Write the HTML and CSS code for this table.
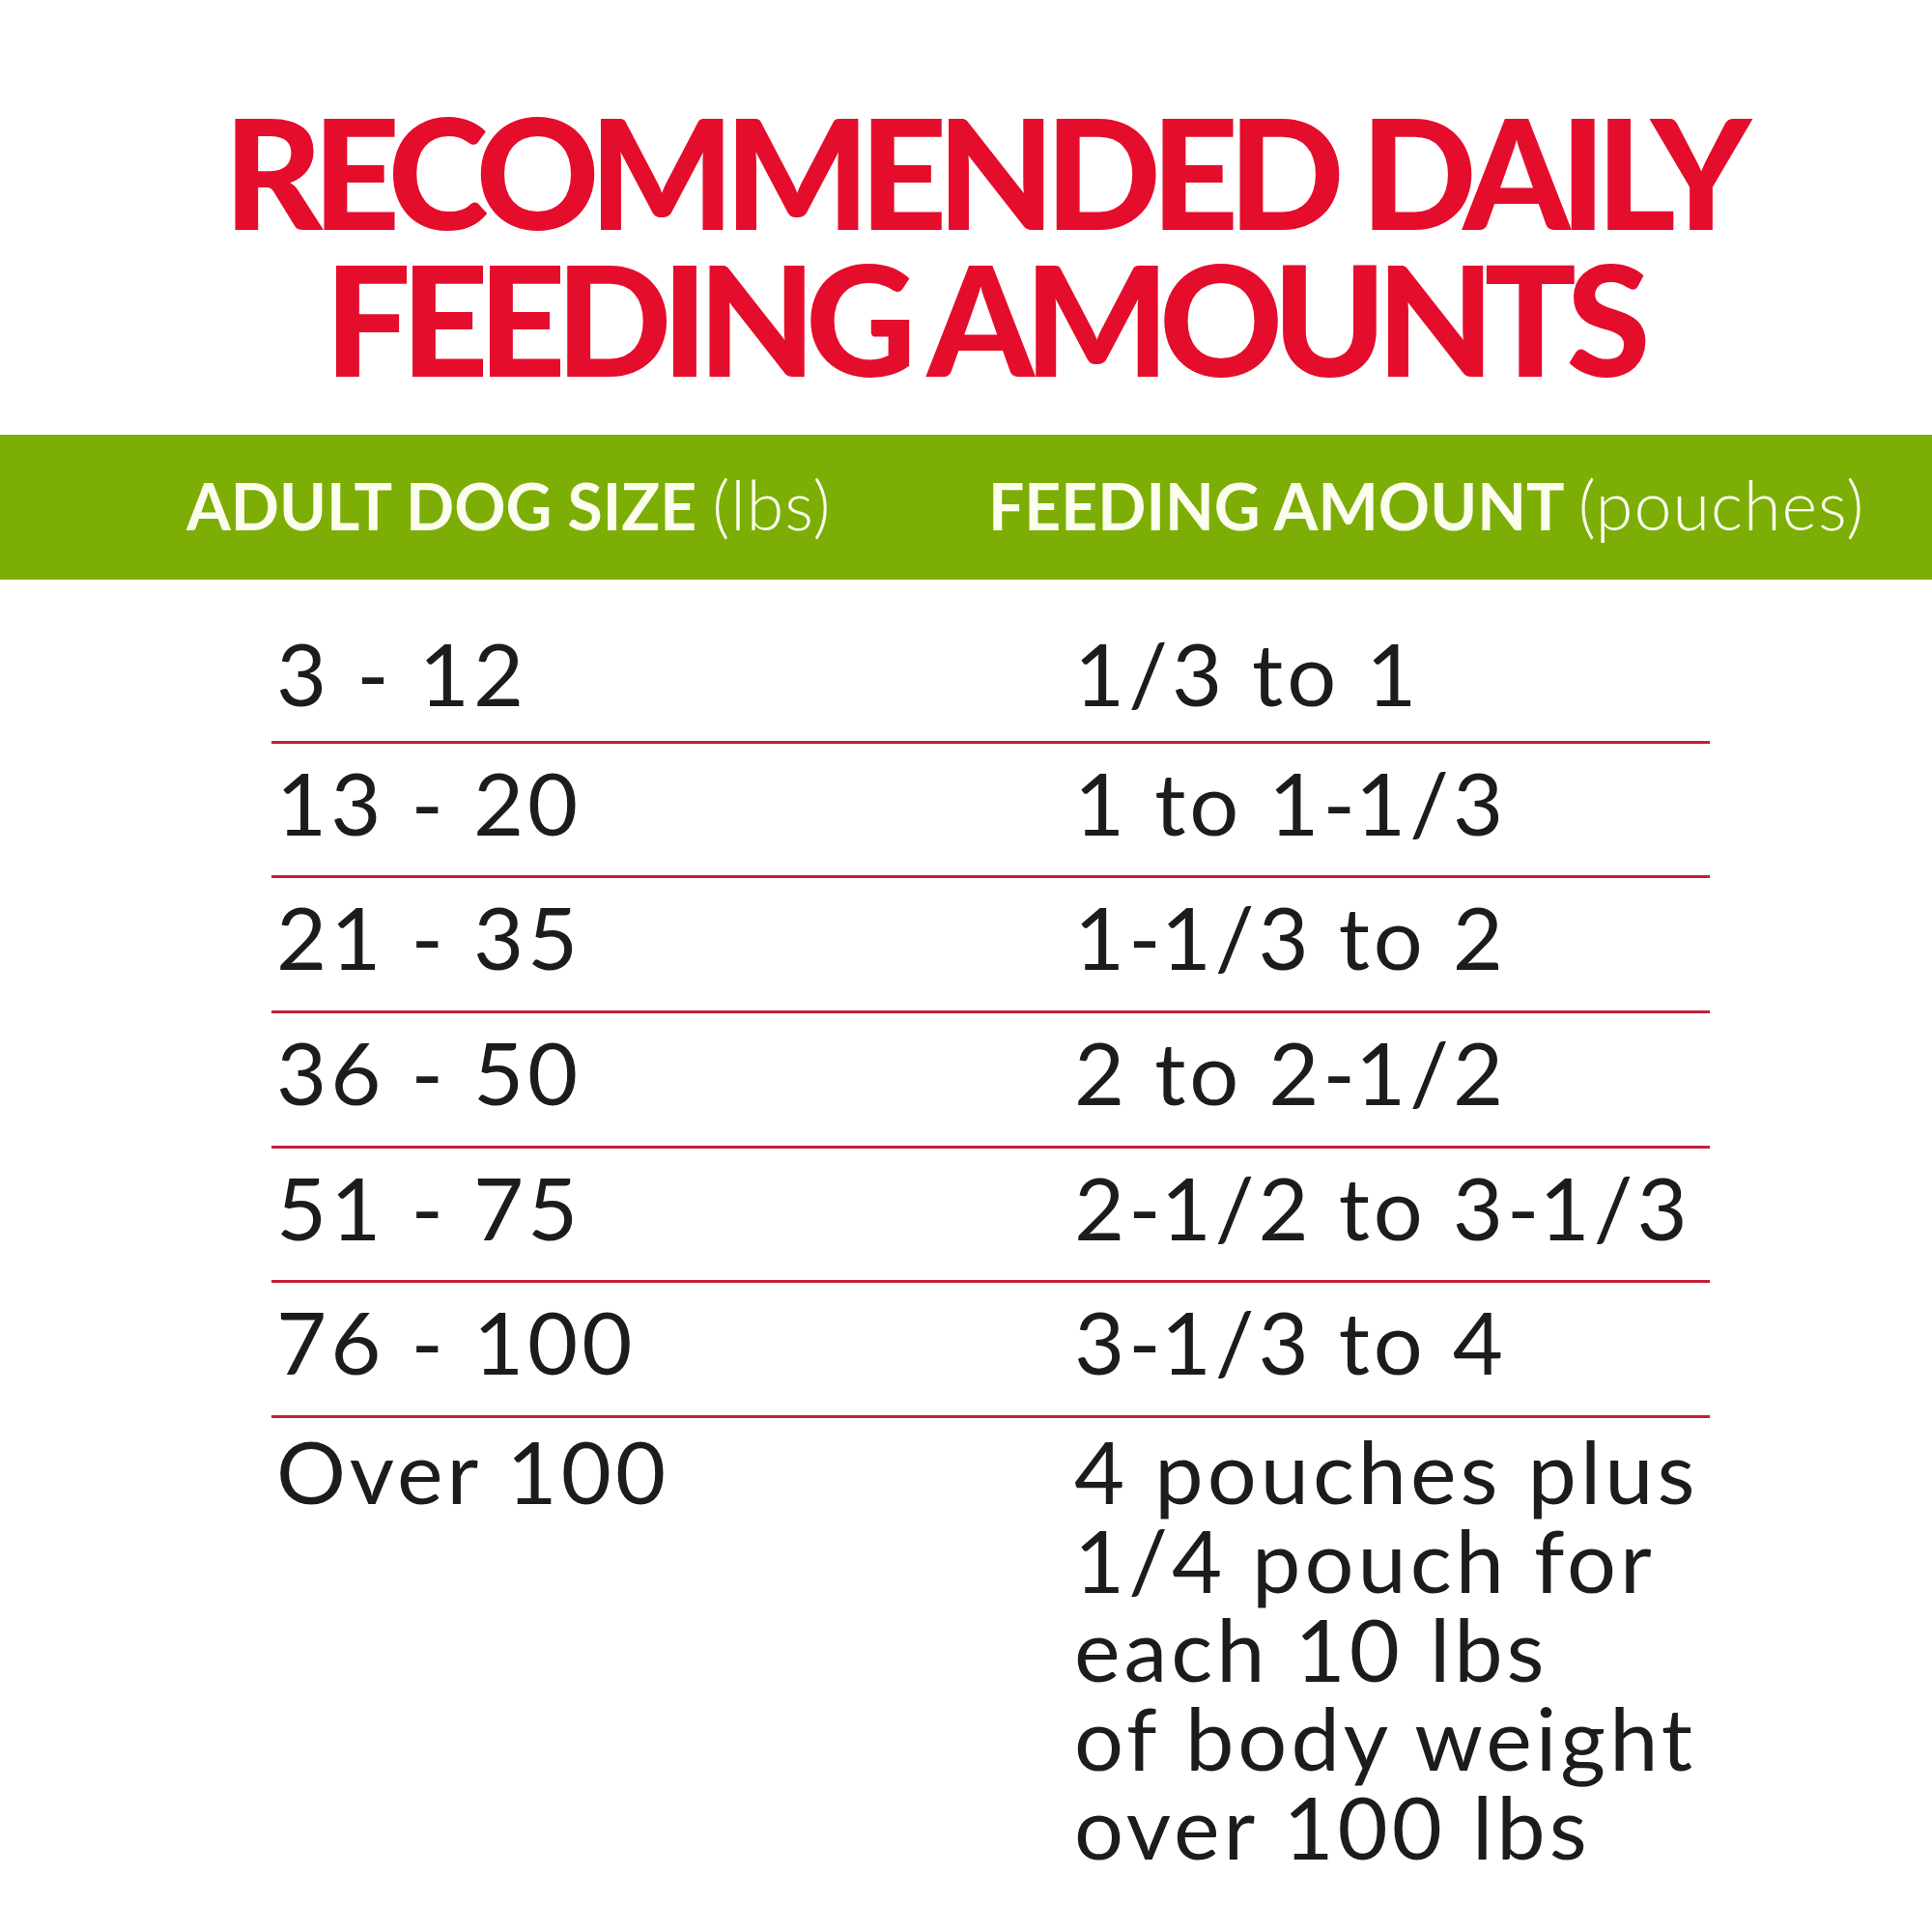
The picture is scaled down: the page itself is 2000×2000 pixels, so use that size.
FILE: index.html
```html
<!DOCTYPE html>
<html lang="en">
<head>
<meta charset="utf-8">
<title>Recommended Daily Feeding Amounts</title>
<link rel="stylesheet" href="styles.css">
</head>
<body>
<main class="chart">
  <h1 class="title">RECOMMENDED DAILY<br>FEEDING AMOUNTS</h1>
  <div class="head">
    <div class="head-cell head-size">ADULT DOG SIZE <span class="unit">(lbs)</span></div>
    <div class="head-cell head-amount">FEEDING AMOUNT <span class="unit">(pouches)</span></div>
  </div>
  <div class="rows">
    <div class="row"><div class="c1">3 - 12</div><div class="c2">1/3 to 1</div></div>
    <div class="row"><div class="c1">13 - 20</div><div class="c2">1 to 1<span class="tight">-</span>1/3</div></div>
    <div class="row"><div class="c1">21 - 35</div><div class="c2">1<span class="tight">-</span>1/3 to 2</div></div>
    <div class="row"><div class="c1">36 - 50</div><div class="c2">2 to 2<span class="tight">-</span>1/2</div></div>
    <div class="row"><div class="c1">51 - 75</div><div class="c2">2<span class="tight">-</span>1/2 to 3<span class="tight">-</span>1/3</div></div>
    <div class="row"><div class="c1">76 - 100</div><div class="c2">3<span class="tight">-</span>1/3 to 4</div></div>
    <div class="row last"><div class="c1">Over 100</div><div class="c2 multi"><span>4 pouches plus</span><span>1/4 pouch for</span><span>each 10 lbs</span><span>of body weight</span><span>over 100 lbs</span></div></div>
  </div>
</main>
</body>
</html>
```
FILE: styles.css
```css
html, body {
  margin: 0;
  padding: 0;
  background: #ffffff;
}

.chart {
  width: 2000px;
  height: 2000px;
  font-family: "Lato", "Liberation Sans", sans-serif;
  color: #1c1c1c;
}

.title {
  margin: 0;
  padding: 101px 0 0 34px;
  font-family: "Lato", "Liberation Sans", sans-serif;
  font-weight: 900;
  font-size: 158px;
  line-height: 152px;
  letter-spacing: -10.5px;
  text-align: center;
  color: #e50d2c;
}

.head {
  margin-top: 45px;
  height: 150px;
  background: #7cae05;
  display: grid;
  grid-template-columns: 1023px 1fr;
  color: #fbfdee;
  font-size: 66px;
  line-height: 144px;
  font-weight: 700;
}

.head-size {
  padding-left: 193px;
}

.unit {
  font-weight: 300;
  font-size: 70px;
  letter-spacing: 1px;
}

.rows {
  margin: 30px 0 0 281px;
  width: 1489px;
}

.row {
  display: grid;
  grid-template-columns: 831px 1fr;
  padding: 14px 0 30.7px;
  border-bottom: 3px solid #c61f37;
  font-size: 90px;
  line-height: 92px;
  letter-spacing: 4px;
}

.row:first-child {
  padding-top: 20px;
  padding-bottom: 24.7px;
}

.row.last {
  padding-top: 8px;
  border-bottom: none;
}

.tight {
  letter-spacing: 0;
}

.c1 {
  padding-left: 5px;
}

.multi {
  display: flex;
  flex-direction: column;
}
```
